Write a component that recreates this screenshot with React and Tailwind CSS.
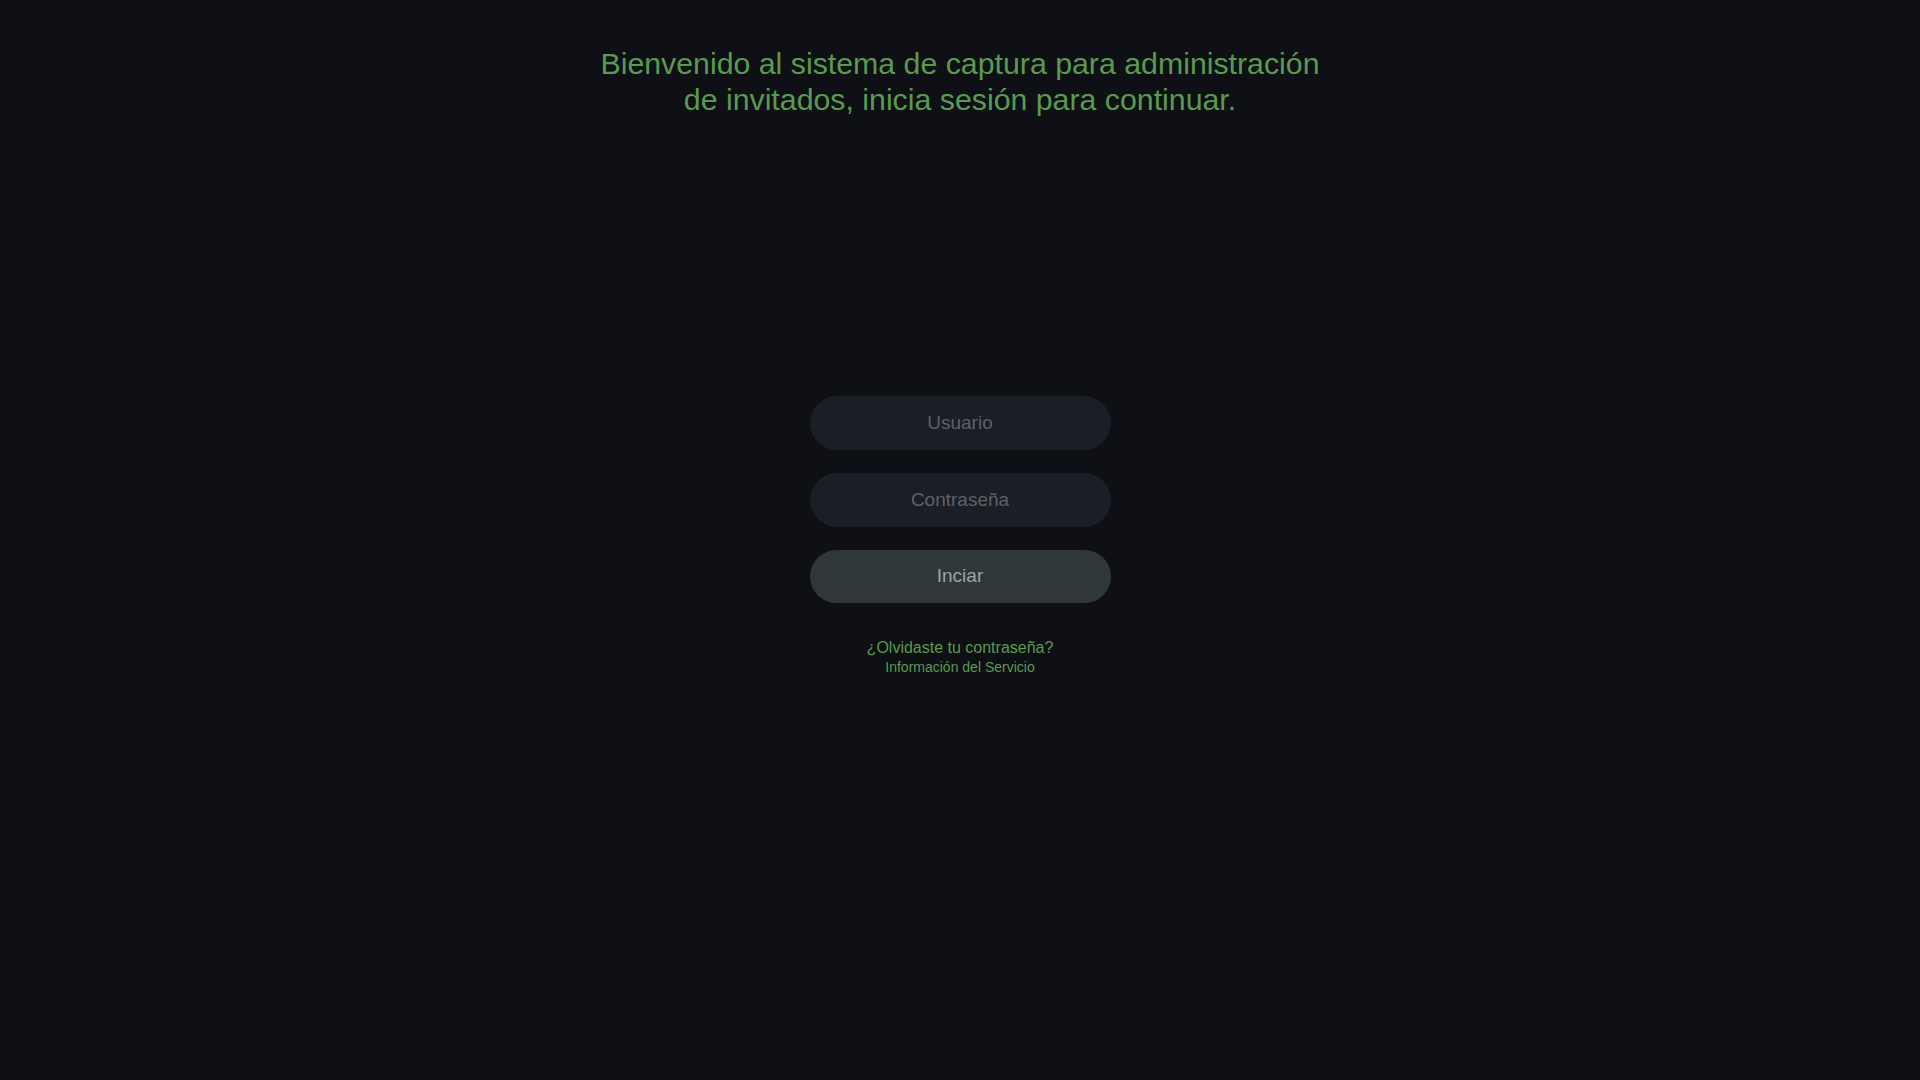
import React from 'react';

const App = () => {
  return (
    <div
      className="min-h-screen w-full bg-[#0e1015] flex flex-col items-center"
      style={{ fontFamily: '"Liberation Sans", Arial, sans-serif' }}
    >
      <h1 className="pt-[46px] text-center text-[30.3px] leading-[36px] text-[#5a9a4f] font-normal">
        Bienvenido al sistema de captura para administración
        <br />
        de invitados, inicia sesión para continuar.
      </h1>

      <form className="mt-[278px] flex flex-col items-center gap-[23px]" onSubmit={(e) => e.preventDefault()}>
        <input
          type="text"
          placeholder="Usuario"
          className="w-[301px] h-[54px] rounded-full bg-[#1b1e25] text-center text-[19px] text-[#9ea2a4] placeholder:text-[#5d6168] outline-none"
        />
        <input
          type="password"
          placeholder="Contraseña"
          className="w-[301px] h-[54px] rounded-full bg-[#1b1e25] text-center text-[19px] text-[#9ea2a4] placeholder:text-[#5d6168] outline-none"
        />
        <button
          type="submit"
          className="w-[301px] h-[53px] rounded-full bg-[#30373a] text-center text-[19px] text-[#9ea2a4]"
        >
          Inciar
        </button>
      </form>

      <div className="mt-[35px] flex flex-col items-center">
        <a href="#" className="text-[16px] leading-[20px] text-[#5a9a4f]">¿Olvidaste tu contraseña?</a>
        <a href="#" className="text-[14px] leading-[18px] text-[#5a9a4f]">Información del Servicio</a>
      </div>
    </div>
  );
};

export default App;
